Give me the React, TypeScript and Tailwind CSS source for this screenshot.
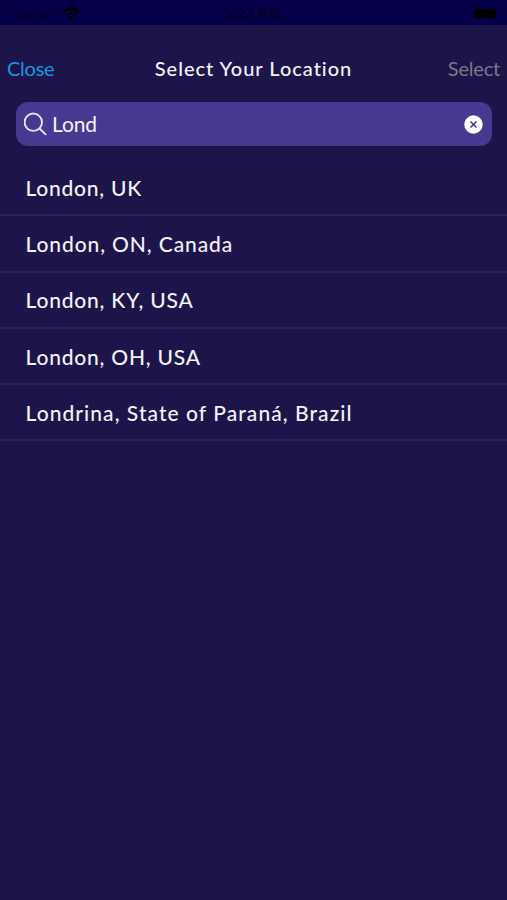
import { useState } from "react";

const places = [
  { name: "London, UK", tracking: "tracking-[0.75px]" },
  { name: "London, ON, Canada", tracking: "tracking-[0.9px]" },
  { name: "London, KY, USA", tracking: "tracking-[0.8px]" },
  { name: "London, OH, USA", tracking: "tracking-[0.8px]" },
  { name: "Londrina, State of Paraná, Brazil", tracking: "tracking-[1.06px]" },
];

function StatusBar() {
  return (
    <div className="grid h-[25px] grid-cols-3 items-center bg-[#06004b] pt-[2px] pl-[9px] pr-[11px] font-['Inter',sans-serif] text-[14px] text-[#03001f]">
      <div className="flex items-center gap-[6px]">
        <span className="tracking-[0.2px]">Carrier</span>
        <svg width="18" height="14" viewBox="0 0 17 13" fill="none" stroke="#000010" strokeWidth="2.5">
          <path d="M1 4.8a10.6 10.6 0 0 1 15 0" />
          <path d="M3.9 7.9a6.5 6.5 0 0 1 9.2 0" />
          <path d="M8.5 12.8 5.9 10.2a3.7 3.7 0 0 1 5.2 0Z" fill="#000010" stroke="none" />
        </svg>
      </div>
      <span className="text-center font-semibold tracking-[0.5px]">3:27 PM</span>
      <div className="h-[9px] w-[22px] justify-self-end rounded-[2px] bg-black" />
    </div>
  );
}

export default function App() {
  const [query, setQuery] = useState("Lond");

  return (
    <div className="h-[900px] w-full overflow-hidden bg-[#1d1549] font-['Lato',sans-serif] text-[#f3f1fa]">
      <StatusBar />

      <header className="flex h-[77px] items-center justify-between px-[7px] pt-[9px] text-[20px]">
        <button className="w-[60px] text-left tracking-[-0.25px] text-[#1795e0]">Close</button>
        <h1 className="font-medium tracking-[0.98px]">Select Your Location</h1>
        <button className="w-[60px] text-right tracking-[-0.2px] text-[#7d7888]">Select</button>
      </header>

      <div className="mr-[15px] ml-[15.5px] flex h-11 items-center rounded-xl bg-[#463a90] pr-[9px] pl-[8.5px]">
        <svg width="24" height="24" viewBox="0 0 24 24" fill="none" stroke="#e6e2fa" strokeWidth="1.9">
          <circle cx="9.3" cy="10.2" r="8.7" />
          <path d="m15.5 16.5 6.6 6.4" />
        </svg>
        <input
          value={query}
          onChange={(e) => setQuery(e.target.value)}
          className="ml-[4px] min-w-0 flex-1 bg-transparent text-[21px] tracking-[-0.1px] outline-none"
        />
        <button onClick={() => setQuery("")}>
          <svg width="19" height="19" viewBox="0 0 19 19">
            <circle cx="9.5" cy="9.5" r="9.2" fill="#fff" />
            <path d="m6.5 6.5 6 6m0-6-6 6" stroke="#463a90" strokeWidth="1.6" />
          </svg>
        </button>
      </div>

      <ul className="mt-[14px]">
        {places.map(({ name, tracking }) => (
          <li
            key={name}
            className={`flex h-[56.25px] items-center border-b-2 border-[#2b2358] pt-px pl-[25.5px] text-[21px] font-medium ${tracking}`}
          >
            {name}
          </li>
        ))}
      </ul>
    </div>
  );
}
